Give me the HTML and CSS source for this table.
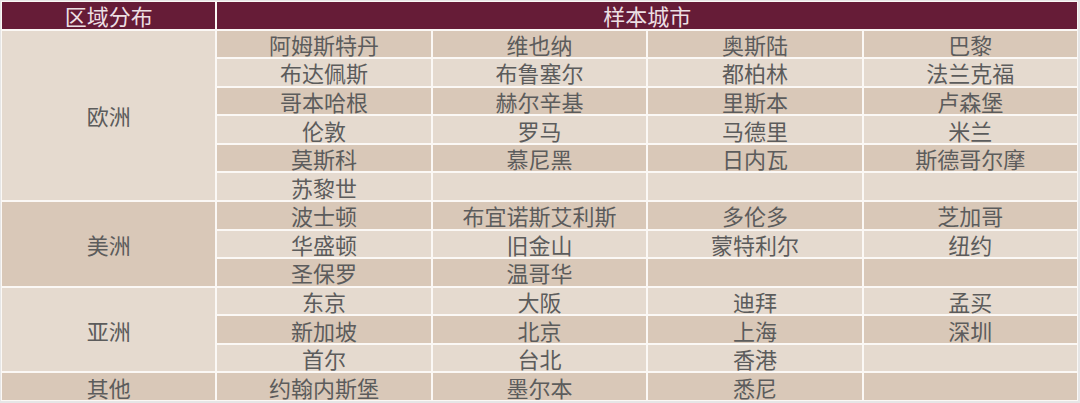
FILE: index.html
```html
<!DOCTYPE html>
<html lang="zh">
<head>
<meta charset="utf-8">
<link rel="stylesheet" href="styles.css">
</head>
<body>
<div class="frame">
  <div class="grid">
    <div class="hd">区域分布</div>
    <div class="hd span4">样本城市</div>

    <div class="region light" style="grid-row: span 6">欧洲</div>
    <div class="d">阿姆斯特丹</div><div class="d">维也纳</div><div class="d">奥斯陆</div><div class="d">巴黎</div>
    <div class="l">布达佩斯</div><div class="l">布鲁塞尔</div><div class="l">都柏林</div><div class="l">法兰克福</div>
    <div class="d">哥本哈根</div><div class="d">赫尔辛基</div><div class="d">里斯本</div><div class="d">卢森堡</div>
    <div class="l">伦敦</div><div class="l">罗马</div><div class="l">马德里</div><div class="l">米兰</div>
    <div class="d">莫斯科</div><div class="d">慕尼黑</div><div class="d">日内瓦</div><div class="d">斯德哥尔摩</div>
    <div class="l">苏黎世</div><div class="l"></div><div class="l"></div><div class="l"></div>

    <div class="region dark" style="grid-row: span 3">美洲</div>
    <div class="d">波士顿</div><div class="d">布宜诺斯艾利斯</div><div class="d">多伦多</div><div class="d">芝加哥</div>
    <div class="l">华盛顿</div><div class="l">旧金山</div><div class="l">蒙特利尔</div><div class="l">纽约</div>
    <div class="d">圣保罗</div><div class="d">温哥华</div><div class="d"></div><div class="d"></div>

    <div class="region light" style="grid-row: span 3">亚洲</div>
    <div class="l">东京</div><div class="l">大阪</div><div class="l">迪拜</div><div class="l">孟买</div>
    <div class="d">新加坡</div><div class="d">北京</div><div class="d">上海</div><div class="d">深圳</div>
    <div class="l">首尔</div><div class="l">台北</div><div class="l">香港</div><div class="l"></div>

    <div class="region dark">其他</div>
    <div class="d">约翰内斯堡</div><div class="d">墨尔本</div><div class="d">悉尼</div><div class="d"></div>
  </div>
</div>
</body>
</html>
```

FILE: styles.css
```css
html, body {
  margin: 0;
  padding: 0;
  background: #ececec;
}
.frame {
  width: 1080px;
  height: 403px;
  box-sizing: border-box;
  padding: 1px 2px 2px 1px;
  background: #e6e6e6;
}
.grid {
  box-sizing: border-box;
  height: 100%;
  background: #fbf8f5;
  padding: 1px;
  display: grid;
  grid-template-columns: repeat(5, 1fr);
  grid-template-rows: repeat(14, 1fr);
  gap: 2px;
  font-family: "Noto Sans CJK SC", "Noto Sans", sans-serif;
  font-size: 22px;
  color: #5c5c5c;
}
.grid > div {
  display: flex;
  align-items: center;
  justify-content: center;
  line-height: 1;
  white-space: nowrap;
}
.hd {
  background: #661c37;
  color: #ecdfe3;
  font-size: 22px;
}
.span4 {
  grid-column: span 4;
}
.d, .dark {
  background: #d9c8b8;
}
.l, .light {
  background: #e5dacf;
}
```
